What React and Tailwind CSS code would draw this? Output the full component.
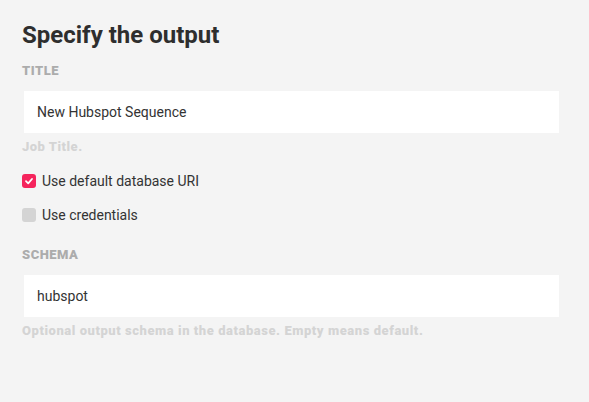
import React from "react";

function Check({ checked, label }) {
  return (
    <label className="flex items-center h-5 gap-[6px] text-[14px] leading-5 text-[#333333]">
      <span
        className={
          checked
            ? "flex items-center justify-center w-[14px] h-[14px] rounded-[3px] bg-[#f5245c]"
            : "flex items-center justify-center w-[14px] h-[14px] rounded-[3px] bg-[#d4d4d4]"
        }
      >
        {checked && (
          <svg width="10" height="10" viewBox="0 0 10 10">
            <path d="M2 5.2 L4.2 7.3 L8 3" fill="none" stroke="#ffffff" strokeWidth="1.8" strokeLinecap="round" strokeLinejoin="round" />
          </svg>
        )}
      </span>
      <span>{label}</span>
    </label>
  );
}

export default function App() {
  return (
    <div
      className="w-[589px] h-[402px] bg-[#f4f4f4] pl-[22px] pr-[30px] pt-[21px]"
      style={{ fontFamily: "Roboto, 'Liberation Sans', sans-serif" }}
    >
      <h1 className="text-[24px] leading-[28px] font-bold text-[#2e2e2e]">Specify the output</h1>
      <div className="mt-[14px] text-[13px] leading-4 font-black text-[#acacac] tracking-[0.5px]">TITLE</div>
      <div className="mt-3 ml-[2px] h-[42px] bg-white flex items-center pl-[13px] text-[14px] text-[#333333]">
        New Hubspot Sequence
      </div>
      <div className="mt-[6px] text-[13px] leading-4 font-black text-[#d4d4d4] tracking-[0.5px]">Job Title.</div>
      <div className="mt-4 flex flex-col gap-[14px]">
        <Check checked label="Use default database URI" />
        <Check label="Use credentials" />
      </div>
      <div className="mt-[22px] text-[13px] leading-4 font-black text-[#acacac] tracking-[0.5px]">SCHEMA</div>
      <div className="mt-3 ml-[2px] h-[42px] bg-white flex items-center pl-[13px] text-[14px] text-[#333333]">
        hubspot
      </div>
      <div className="mt-[6px] text-[13px] leading-4 font-black text-[#d4d4d4] tracking-[0.55px]">
        Optional output schema in the database. Empty means default.
      </div>
    </div>
  );
}
